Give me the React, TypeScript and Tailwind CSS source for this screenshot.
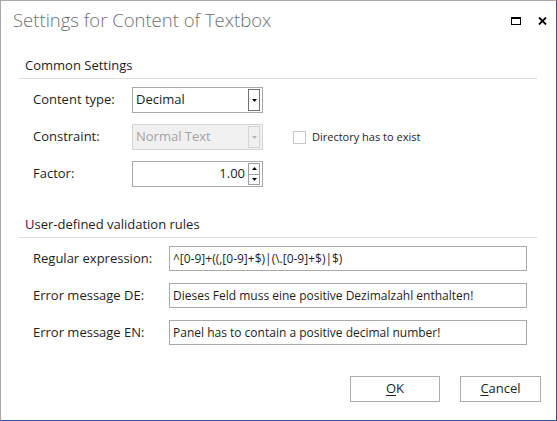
import React from "react";

const FONT = { fontFamily: '"Open Sans", "Noto Sans", sans-serif' };

const Caret = ({ up = false, color = "#000" }: { up?: boolean; color?: string }) => (
  <svg width="5" height="3" viewBox="0 0 5 3" className="block">
    {up ? <path d="M0 3 L5 3 L2.5 0 Z" fill={color} /> : <path d="M0 0 L5 0 L2.5 3 Z" fill={color} />}
  </svg>
);

const Row = ({ label, children }: { label: string; children: React.ReactNode }) => (
  <div className="flex h-[26px] items-center">
    <div className="w-[99px] shrink-0 text-[13px] text-[#1e1e1e]">{label}</div>
    {children}
  </div>
);

const TextRow = ({ label, value }: { label: string; value: string }) => (
  <div className="flex h-[25px] items-center">
    <div className="w-[136px] shrink-0 text-[13px] text-[#1e1e1e]">{label}</div>
    <div className="flex h-[25px] w-[358px] items-center border border-[#a9a9a9] px-[3px] text-[12px] text-[#1e1e1e] whitespace-nowrap overflow-hidden">
      {value}
    </div>
  </div>
);

const SectionHeader = ({ title, top }: { title: string; top: string }) => (
  <div className={`${top} border-b border-[#dcdcdc] pb-[5px] pl-[6px] text-[13px] leading-[16px] text-[#1e1e1e]`}>
    {title}
  </div>
);

export default function App() {
  return (
    <div
      style={FONT}
      className="flex h-[421px] w-[557px] flex-col border-t border-l border-[#a8a8a8] border-r-[#2b579a] border-b-[#2b579a] border-r border-b bg-white"
    >
      {/* Title bar */}
      <div className="flex h-[39px] shrink-0 items-center justify-between pl-[12px] pr-[9px]">
        <div className="text-[18.5px] font-light leading-none text-[#707070]">Settings for Content of Textbox</div>
        <div className="flex items-center gap-[17px]">
          <svg width="10" height="8" viewBox="0 0 10 8">
            <rect x="0.5" y="0.5" width="9" height="7" fill="none" stroke="#000" />
            <rect x="0" y="0" width="10" height="2" fill="#000" />
          </svg>
          <svg width="9" height="8" viewBox="0 0 9 8">
            <path d="M1 0.5 L8 7.5 M8 0.5 L1 7.5" stroke="#000" strokeWidth="1.8" />
          </svg>
        </div>
      </div>

      <div className="flex flex-1 flex-col pl-[18px] pr-[19px]">
        <SectionHeader title="Common Settings" top="pt-[17px]" />

        <div className="mt-[8px] flex flex-col gap-[11px] pl-[14px]">
          <Row label="Content type:">
            <div className="flex h-[26px] w-[131px] items-center justify-between border border-[#a9a9a9] pl-[3px] pr-[2px] text-[13px] text-[#1e1e1e]">
              <span>Decimal</span>
              <div className="flex h-[22px] w-[12px] items-center justify-center border border-[#707070] bg-white">
                <Caret />
              </div>
            </div>
          </Row>
          <Row label="Constraint:">
            <div className="flex h-[26px] w-[131px] items-center justify-between border border-[#d5d5d5] bg-[#f0f0f0] pl-[3px] pr-[2px] text-[13px] text-[#a3a3a3]">
              <span>Normal Text</span>
              <div className="flex h-[22px] w-[12px] items-center justify-center border border-[#d5d5d5]">
                <Caret color="#b5b5b5" />
              </div>
            </div>
            <div className="ml-[30px] flex items-center gap-[6px]">
              <div className="h-[13px] w-[13px] border border-[#c8c8c8] bg-white" />
              <span className="text-[11px] text-[#1e1e1e]">Directory has to exist</span>
            </div>
          </Row>
          <Row label="Factor:">
            <div className="flex h-[26px] w-[131px] items-center justify-end border border-[#a9a9a9] pr-[2px] text-[13px] text-[#1e1e1e]">
              <span className="mr-[3px]">1.00</span>
              <div className="flex h-[22px] w-[12px] flex-col border border-[#a0a0a0]">
                <div className="flex flex-1 items-center justify-center border-b border-[#a0a0a0]">
                  <Caret up />
                </div>
                <div className="flex flex-1 items-center justify-center">
                  <Caret />
                </div>
              </div>
            </div>
          </Row>
        </div>

        <SectionHeader title="User-defined validation rules" top="pt-[29px]" />

        <div className="mt-[8px] flex flex-col gap-[12px] pl-[14px]">
          <TextRow label="Regular expression:" value="^[0-9]+((,[0-9]+$)|(\.[0-9]+$)|$)" />
          <TextRow label="Error message DE:" value="Dieses Feld muss eine positive Dezimalzahl enthalten!" />
          <TextRow label="Error message EN:" value="Panel has to contain a positive decimal number!" />
        </div>

        <div className="mt-[31px] flex justify-end gap-[20px]">
          <button className="flex h-[26px] w-[90px] items-center justify-center border border-[#adadad] bg-white text-[13px] text-[#1e1e1e]">
            <span className="underline underline-offset-2">O</span>K
          </button>
          <button className="-mr-[4px] flex h-[26px] w-[81px] items-center justify-center border border-[#adadad] bg-white text-[13px] text-[#1e1e1e]">
            <span className="underline underline-offset-2">C</span>ancel
          </button>
        </div>
      </div>
    </div>
  );
}
